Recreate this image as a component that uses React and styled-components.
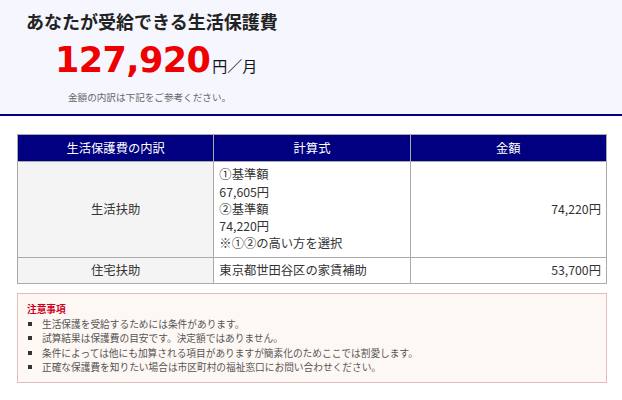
import React from "react";
import styled, { createGlobalStyle } from "styled-components";

const Global = createGlobalStyle`
  html, body { margin: 0; padding: 0; background: #ffffff; }
  body { font-family: "Noto Sans CJK JP", "Noto Sans", sans-serif; color: #333; }
`;

const Page = styled.div`
  width: 622px;
  display: flex;
  flex-direction: column;
`;

const Hero = styled.header`
  background: #f5f6fe;
  border-bottom: 2px solid #000080;
  padding: 9px 0 0 26px;
  box-sizing: border-box;
  height: 116px;
  display: flex;
  flex-direction: column;
`;

const Title = styled.h1`
  margin: 0;
  font-size: 18px;
  line-height: 24px;
  font-weight: 700;
  color: #222;
`;

const AmountRow = styled.div`
  margin: 7px 0 0 29px;
  display: flex;
  align-items: baseline;
  line-height: 40px;
`;

const Amount = styled.span`
  font-family: "DejaVu Sans", "Noto Sans CJK JP", sans-serif;
  font-weight: 700;
  font-size: 35px;
  letter-spacing: -0.6px;
  color: #ee0000;
`;

const Unit = styled.span`
  font-size: 15px;
  color: #111;
  margin-left: 2px;
`;

const Hint = styled.p`
  margin: 4px 0 0 42px;
  font-size: 9.6px;
  line-height: 14px;
  color: #666;
`;

const Body = styled.div`
  padding: 18px 15px 0 17px;
  display: flex;
  flex-direction: column;
  gap: 9px;
`;

const Table = styled.table`
  width: 590px;
  border-collapse: collapse;
  table-layout: fixed;
  font-size: 12.3px;
  line-height: 17.3px;
`;

const Th = styled.th`
  background: #000080;
  color: #fff;
  font-weight: 400;
  border: 1px solid #aaa;
  padding: 4.5px 5px;
  text-align: center;
`;

const Td = styled.td`
  border: 1px solid #aaa;
  padding: 4px 5px;
  color: #333;
  background: ${(p) => (p.$label ? "#f4f4f4" : "#fff")};
  text-align: ${(p) => p.$align || "left"};
  vertical-align: middle;
`;

const Notes = styled.section`
  border: 1px solid #e3bcbc;
  background: #fdf8f4;
  padding: 8px 9px 7px;
  font-size: 9.7px;
  line-height: 14.5px;
  color: #555;
`;

const NotesTitle = styled.div`
  color: #cc0022;
  font-weight: 700;
`;

const List = styled.ul`
  margin: 0;
  padding: 0;
  list-style: none;
`;

const Item = styled.li`
  display: flex;
  align-items: center;
  &::before {
    content: "";
    width: 4px;
    height: 4px;
    background: #333;
    margin: 0 10px 0 1px;
    flex: none;
  }
`;

export default function App() {
  return (
    <Page>
      <Global />
      <Hero>
        <Title>あなたが受給できる生活保護費</Title>
        <AmountRow>
          <Amount>127,920</Amount>
          <Unit>円／月</Unit>
        </AmountRow>
        <Hint>金額の内訳は下記をご参考ください。</Hint>
      </Hero>
      <Body>
        <Table>
          <thead>
            <tr>
              <Th>生活保護費の内訳</Th>
              <Th>計算式</Th>
              <Th>金額</Th>
            </tr>
          </thead>
          <tbody>
            <tr>
              <Td $label $align="center">生活扶助</Td>
              <Td>
                ①基準額
                <br />
                67,605円
                <br />
                ②基準額
                <br />
                74,220円
                <br />
                ※①②の高い方を選択
              </Td>
              <Td $align="right">74,220円</Td>
            </tr>
            <tr>
              <Td $label $align="center">住宅扶助</Td>
              <Td>東京都世田谷区の家賃補助</Td>
              <Td $align="right">53,700円</Td>
            </tr>
          </tbody>
        </Table>
        <Notes>
          <NotesTitle>注意事項</NotesTitle>
          <List>
            <Item>生活保護を受給するためには条件があります。</Item>
            <Item>試算結果は保護費の目安です。決定額ではありません。</Item>
            <Item>条件によっては他にも加算される項目がありますが簡素化のためここでは割愛します。</Item>
            <Item>正確な保護費を知りたい場合は市区町村の福祉窓口にお問い合わせください。</Item>
          </List>
        </Notes>
      </Body>
    </Page>
  );
}
